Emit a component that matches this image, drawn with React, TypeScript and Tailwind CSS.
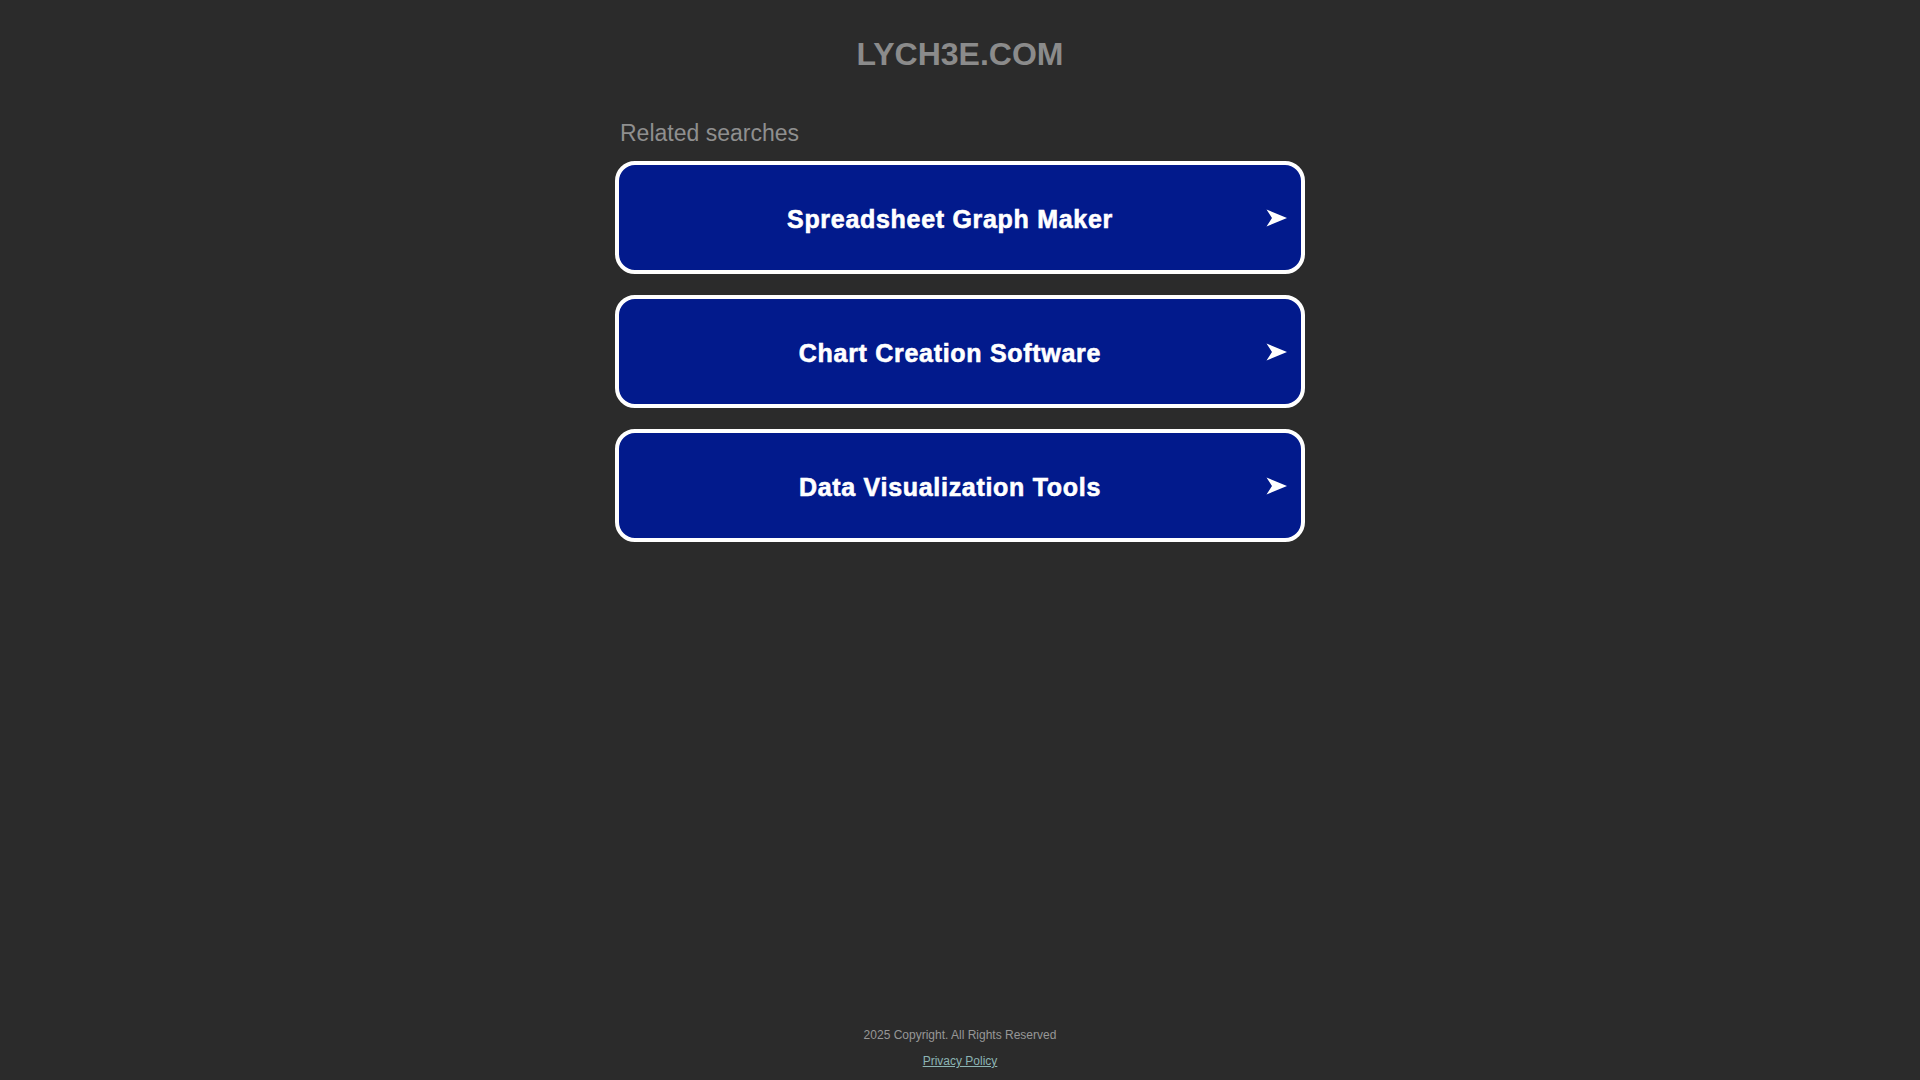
const SEARCHES = [
  'Spreadsheet Graph Maker',
  'Chart Creation Software',
  'Data Visualization Tools',
]

// Стрелка справа в кнопке — как глиф ➤, но нарисована, чтобы совпадала по форме.
const Arrow = () => (
  <svg width="21" height="18" viewBox="0 0 21 18" className="shrink-0">
    <polygon points="0.5,0.5 21,9 0.5,17.5 6,9" fill="#ffffff" />
  </svg>
)

const SearchButton = ({ label }: { label: string }) => (
  <a
    href="#"
    className="flex h-[113px] items-center rounded-[20px] border-4 border-white bg-[#021a8c] pl-[28px] pr-[14px]"
  >
    <span className="flex-1 pt-[2px] text-center text-[25px] font-bold leading-[30px] tracking-[0.7px] text-white [-webkit-text-stroke:0.6px_#ffffff]">
      {label}
    </span>
    <span className="ml-[13px] flex">
      <Arrow />
    </span>
  </a>
)

export default function App() {
  return (
    <div
      className="flex min-h-screen flex-col bg-[#2b2b2b]"
      style={{ fontFamily: '"Liberation Sans", Arial, sans-serif' }}
    >
      <main className="flex flex-1 flex-col items-center pt-[34px]">
        <h1 className="text-[32px] font-bold leading-[40px] text-[#8b8b8b]">
          LYCH3E.COM
        </h1>
        <section className="mt-[45px] flex w-[690px] flex-col">
          <h2 className="pl-[5px] text-[23px] leading-[28px] text-[#8f8f8f]">
            Related searches
          </h2>
          <div className="mt-[14px] flex flex-col gap-[21px]">
            {SEARCHES.map((s) => (
              <SearchButton key={s} label={s} />
            ))}
          </div>
        </section>
      </main>
      <footer className="flex flex-col items-center gap-[10px] pb-[11px] text-[12px] leading-[16px]">
        <span className="text-[#979797]">2025 Copyright. All Rights Reserved</span>
        <a href="#" className="text-[#8cb4b4] underline">
          Privacy Policy
        </a>
      </footer>
    </div>
  )
}
